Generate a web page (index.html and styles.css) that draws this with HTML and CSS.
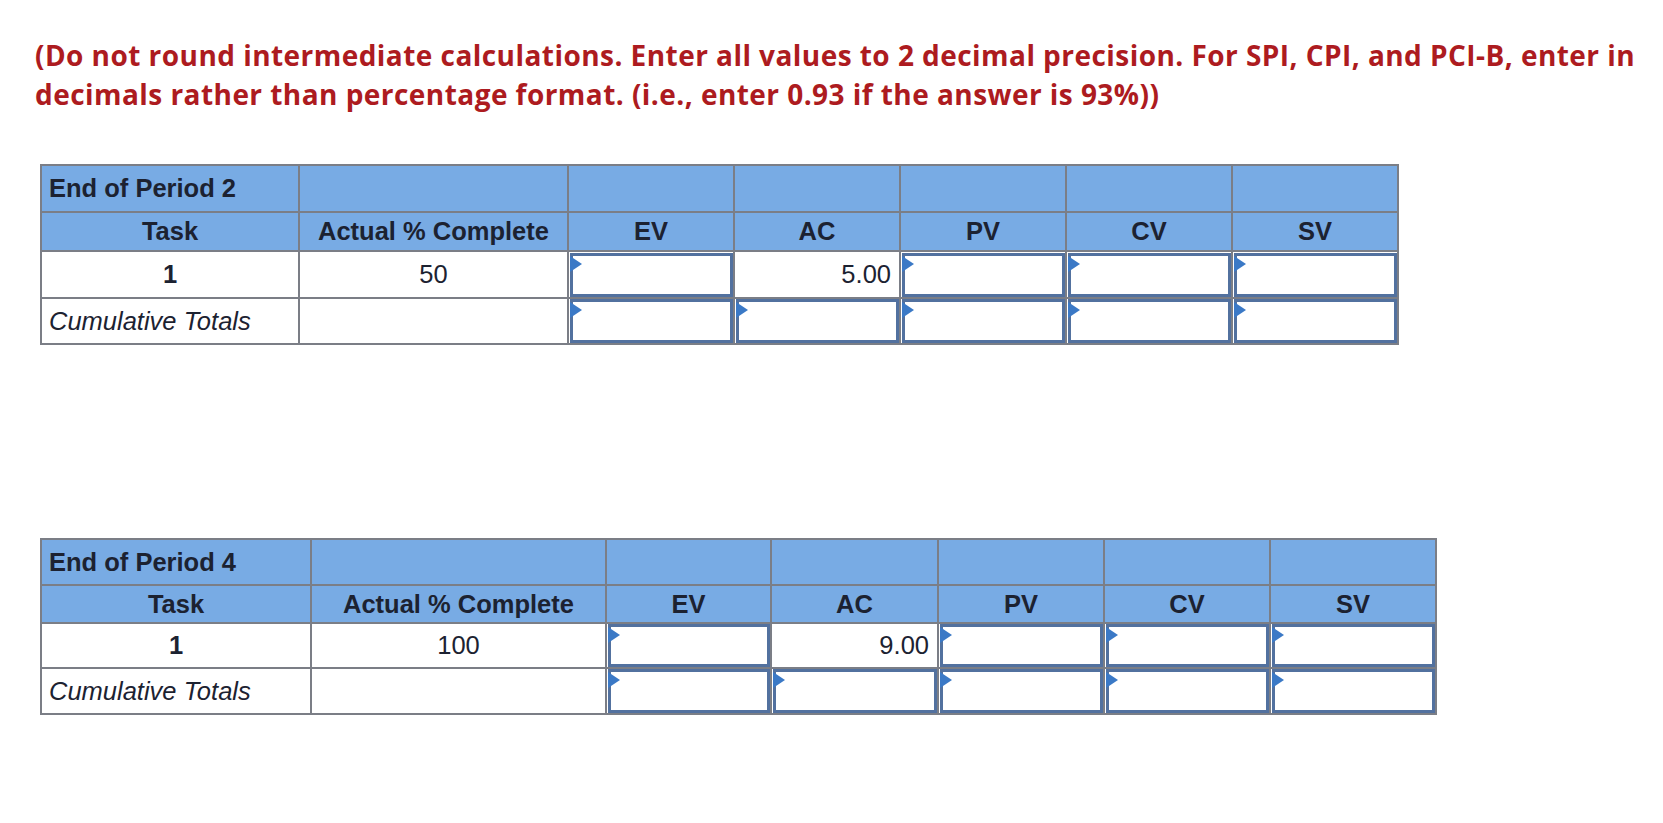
FILE: index.html
```html
<!DOCTYPE html>
<html lang="en">
<head>
<meta charset="utf-8">
<title>Earned Value Worksheet</title>
<link rel="stylesheet" href="styles.css">
</head>
<body>
<div class="page">
  <p class="instructions">(Do not round intermediate calculations. Enter all values to 2 decimal precision. For SPI, CPI, and PCI-B, enter in<br>decimals rather than percentage format. (i.e., enter 0.93 if the answer is 93%))</p>

  <table class="grid p2">
    <colgroup>
      <col class="c1"><col class="c2"><col class="c3"><col class="c4"><col class="c5"><col class="c6"><col class="c7">
    </colgroup>
    <tr class="r-title">
      <th class="left">End of Period 2</th><th></th><th></th><th></th><th></th><th></th><th></th>
    </tr>
    <tr class="r-head">
      <th>Task</th><th>Actual % Complete</th><th>EV</th><th>AC</th><th>PV</th><th>CV</th><th>SV</th>
    </tr>
    <tr class="r-data">
      <td class="bold center">1</td>
      <td class="center">50</td>
      <td class="in"><div class="box"><span class="flag"></span></div></td>
      <td class="num">5.00</td>
      <td class="in"><div class="box"><span class="flag"></span></div></td>
      <td class="in"><div class="box"><span class="flag"></span></div></td>
      <td class="in"><div class="box"><span class="flag"></span></div></td>
    </tr>
    <tr class="r-total">
      <td class="italic">Cumulative Totals</td>
      <td></td>
      <td class="in"><div class="box"><span class="flag"></span></div></td>
      <td class="in"><div class="box"><span class="flag"></span></div></td>
      <td class="in"><div class="box"><span class="flag"></span></div></td>
      <td class="in"><div class="box"><span class="flag"></span></div></td>
      <td class="in"><div class="box"><span class="flag"></span></div></td>
    </tr>
  </table>

  <table class="grid p4">
    <colgroup>
      <col class="c1"><col class="c2"><col class="c3"><col class="c4"><col class="c5"><col class="c6"><col class="c7">
    </colgroup>
    <tr class="r-title">
      <th class="left">End of Period 4</th><th></th><th></th><th></th><th></th><th></th><th></th>
    </tr>
    <tr class="r-head">
      <th>Task</th><th>Actual % Complete</th><th>EV</th><th>AC</th><th>PV</th><th>CV</th><th>SV</th>
    </tr>
    <tr class="r-data">
      <td class="bold center">1</td>
      <td class="center">100</td>
      <td class="in"><div class="box"><span class="flag"></span></div></td>
      <td class="num">9.00</td>
      <td class="in"><div class="box"><span class="flag"></span></div></td>
      <td class="in"><div class="box"><span class="flag"></span></div></td>
      <td class="in"><div class="box"><span class="flag"></span></div></td>
    </tr>
    <tr class="r-total">
      <td class="italic">Cumulative Totals</td>
      <td></td>
      <td class="in"><div class="box"><span class="flag"></span></div></td>
      <td class="in"><div class="box"><span class="flag"></span></div></td>
      <td class="in"><div class="box"><span class="flag"></span></div></td>
      <td class="in"><div class="box"><span class="flag"></span></div></td>
      <td class="in"><div class="box"><span class="flag"></span></div></td>
    </tr>
  </table>
</div>
</body>
</html>
```

FILE: styles.css
```css
html, body {
  margin: 0;
  padding: 0;
  background: #ffffff;
}

.page {
  padding: 36px 0 0 35px;
}

.instructions {
  margin: 0;
  font-family: "Open Sans", "Liberation Sans", sans-serif;
  font-weight: 700;
  font-size: 28px;
  line-height: 39px;
  letter-spacing: 0.45px;
  color: #ad1b20;
  white-space: nowrap;
}

.grid {
  border-collapse: collapse;
  table-layout: fixed;
  margin-left: 5px;
  font-family: "Liberation Sans", Arial, sans-serif;
  font-size: 25.5px;
  color: #1c2231;
}

.p2 {
  margin-top: 50px;
  width: 1357px;
}

.p4 {
  margin-top: 193px;
  width: 1395px;
}

.p2 .c1 { width: 258px; }
.p2 .c2 { width: 269px; }
.p2 .c3 { width: 166px; }
.p2 .c4 { width: 166px; }
.p2 .c5 { width: 166px; }
.p2 .c6 { width: 166px; }
.p2 .c7 { width: 166px; }

.p4 .c1 { width: 270px; }
.p4 .c2 { width: 295px; }
.p4 .c3 { width: 165px; }
.p4 .c4 { width: 167px; }
.p4 .c5 { width: 166px; }
.p4 .c6 { width: 166px; }
.p4 .c7 { width: 166px; }

.grid th,
.grid td {
  border: 2px solid #7b7e86;
  padding: 0 8px;
  box-sizing: border-box;
  vertical-align: middle;
  white-space: nowrap;
  overflow: visible;
}

.grid th {
  background: #78abe4;
  font-weight: 700;
  text-align: center;
}

.grid th.left {
  text-align: left;
  padding-left: 7px;
}

.p2 .r-title th { height: 47px; }
.p2 .r-head th { height: 39px; }
.p2 .r-data td { height: 47px; }
.p2 .r-total td { height: 46px; }

.p4 .r-title th { height: 46px; }
.p4 .r-head th { height: 38px; }
.p4 .r-data td { height: 45px; }
.p4 .r-total td { height: 46px; }

.grid td.center { text-align: center; }
.grid td.bold { font-weight: 700; }
.grid td.italic { font-style: italic; text-align: left; padding-left: 7px; }
.grid td.num { text-align: right; padding-right: 8px; }

.grid td.in {
  padding: 0;
  border-color: #7b7e86;
}

.box {
  position: relative;
  box-sizing: border-box;
  border: 3px solid #52719f;
  height: 44px;
  margin: 0 0 0 1px;
  background: #ffffff;
}

.p4 .r-data .box { height: 43px; }
.p4 .r-total .box { height: 44px; }

.flag {
  position: absolute;
  left: -3px;
  top: 0;
  width: 0;
  height: 0;
  border-left: 12px solid #3b79c6;
  border-top: 8px solid transparent;
  border-bottom: 8px solid transparent;
}
```
